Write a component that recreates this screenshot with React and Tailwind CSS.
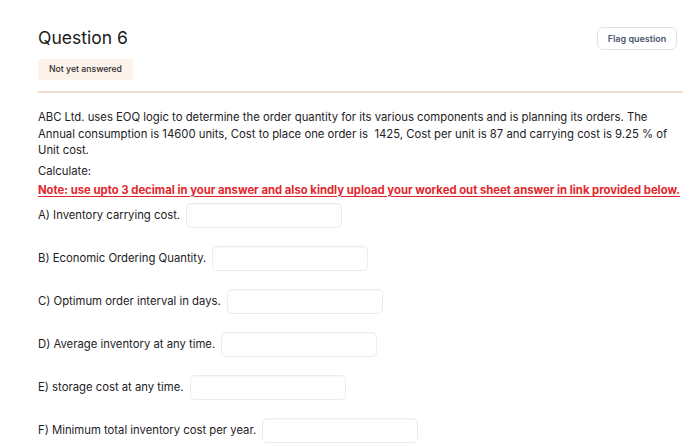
const rows = [
  "A) Inventory carrying cost.",
  "B) Economic Ordering Quantity.",
  "C) Optimum order interval in days.",
  "D) Average inventory at any time.",
  "E) storage cost at any time.",
  "F) Minimum total inventory cost per year.",
];

export default function App() {
  return (
    <div className="w-[700px] h-[446px] overflow-hidden bg-white font-['Inter',sans-serif] text-[#1d2125]">
      <div className="pl-[38px] pr-[17px] pt-[27px]">
        <div className="flex items-start justify-between">
          <div>
            <h3 className="text-[17.5px] leading-[22px] font-normal text-[#1a1a1a]">Question 6</h3>
            <div className="mt-[10px] w-[95px] h-[21px] bg-[#fcf3ea] flex items-center justify-center text-[8.7px] font-medium text-[#2b2b2b]">
              Not yet answered
            </div>
          </div>
          <button className="mr-[6px] w-[80px] h-[23px] border border-[#dfe1e6] rounded-[6px] text-[9px] font-semibold text-[#4d5670] bg-white flex items-center justify-center">
            Flag question
          </button>
        </div>
        <div className="mt-[11px] h-[2px] bg-[#f0ddcf]" />
        <div className="pt-[16px] text-[11.3px] leading-[16.7px]">
          <p>
            ABC Ltd. uses EOQ logic to determine the order quantity for its various components and is planning its orders. The Annual consumption is 14600 units, Cost to place one order is &nbsp;1425, Cost per unit is 87 and carrying cost is 9.25 % of Unit cost.
          </p>
          <p className="mt-[4px]">Calculate:</p>
          <p className="mt-[2px] font-bold text-[#e3262c] underline underline-offset-2">
            Note: use upto 3 decimal in your answer and also kindly upload your worked out sheet answer in link provided below.
          </p>
          <div className="mt-[4px] flex flex-col gap-[18px]">
            {rows.map((r) => (
              <div key={r} className="flex items-center h-[25px]">
                <span>{r}</span>
                <input
                  type="text"
                  className="ml-[6px] w-[156px] h-[25px] border border-[#ececec] rounded-[5px] bg-white outline-none shadow-[inset_0_1px_1px_rgba(0,0,0,0.03)]"
                />
              </div>
            ))}
          </div>
        </div>
      </div>
    </div>
  );
}
